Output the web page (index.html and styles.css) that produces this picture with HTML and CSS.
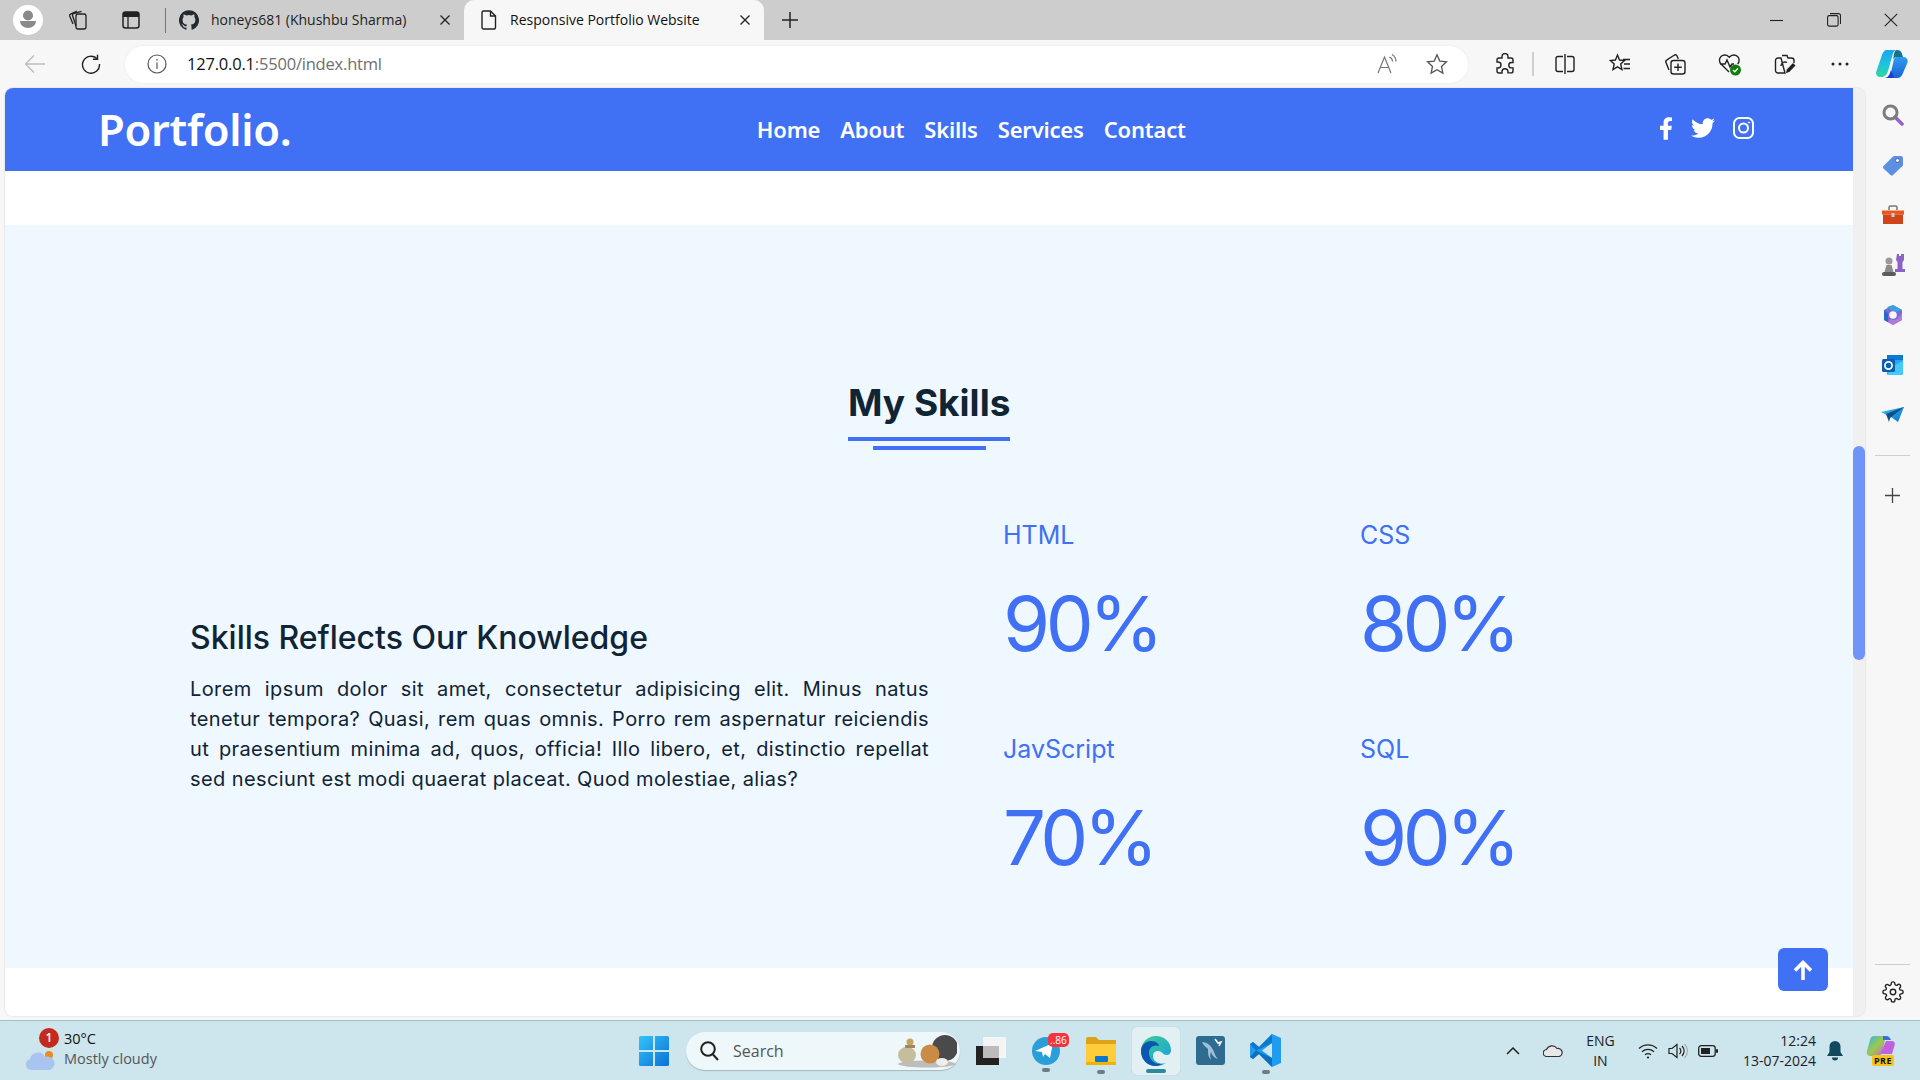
FILE: index.html
```html
<!DOCTYPE html>
<html lang="en">
<head>
<meta charset="utf-8">
<title>Responsive Portfolio Website</title>
<link rel="stylesheet" href="styles.css">
</head>
<body>
<svg class="defs" width="0" height="0" aria-hidden="true">
  <defs>
    <linearGradient id="winG" x1="0" y1="0" x2="1" y2="1"><stop offset="0" stop-color="#35c4f8"/><stop offset="1" stop-color="#0a6fd6"/></linearGradient>
    <linearGradient id="edgeG" x1="0" y1="0" x2="1" y2="1"><stop offset="0" stop-color="#3bd08f"/><stop offset="1" stop-color="#1b9de2"/></linearGradient>
    <linearGradient id="copG" x1="0" y1="0" x2="0" y2="1"><stop offset="0" stop-color="#1aa6f0"/><stop offset=".6" stop-color="#1fc8d8"/><stop offset="1" stop-color="#32d69a"/></linearGradient>
    <linearGradient id="copH" x1="0" y1="0" x2="0" y2="1"><stop offset="0" stop-color="#2f9cf0"/><stop offset="1" stop-color="#1a62d8"/></linearGradient>
    <linearGradient id="sendG" x1="0" y1="0" x2="1" y2="1"><stop offset="0" stop-color="#35c0f5"/><stop offset="1" stop-color="#0b72c9"/></linearGradient>
    <linearGradient id="prism" x1="0" y1="0" x2="1" y2="1"><stop offset="0" stop-color="#2bb4f0"/><stop offset=".5" stop-color="#9ccb4a"/><stop offset="1" stop-color="#c062e0"/></linearGradient>
  </defs>
</svg>

<header class="tabstrip">
  <span class="profile">
    <svg width="30" height="30" viewBox="0 0 30 30"><circle cx="15" cy="15" r="15" fill="#fff"/><circle cx="15" cy="10.5" r="5" fill="#8a8a8a"/><path d="M7 16h16a8 7 0 0 1-16 0z" fill="#8a8a8a"/></svg>
  </span>
  <span class="strip-icon strip-work">
    <svg width="22" height="22" viewBox="0 0 22 22" fill="none" stroke="#222" stroke-width="1.3"><rect x="9" y="5" width="10" height="15" rx="2"/><path d="M9 17 5.500 6.500a1.500 1.500 0 0 1 1-1.900l8-2.200M6 15 2.700 7a1.500 1.500 0 0 1 .8-1.900L10 2"/></svg>
  </span>
  <span class="strip-icon strip-vert">
    <svg width="18" height="18" viewBox="0 0 18 18"><rect x="1" y="1" width="16" height="16" rx="2.500" fill="none" stroke="#222" stroke-width="1.500"/><path d="M1 3.500a2.500 2.500 0 0 1 2.500-2.500h11a2.500 2.500 0 0 1 2.500 2.500V6H1z" fill="#222"/><path d="M6 6v11" stroke="#222" stroke-width="1.300"/></svg>
  </span>
  <span class="strip-sep"></span>
  <div class="tab">
    <svg class="tab-fav" width="20" height="20" viewBox="0 0 24 24"><path fill="#24292f" d="M12 .3a12 12 0 0 0-3.800 23.400c.6.1.8-.3.8-.6v-2c-3.300.7-4-1.600-4-1.600-.6-1.400-1.400-1.800-1.400-1.800-1-.7.1-.7.1-.7 1.200 0 1.900 1.200 1.900 1.200 1 1.800 2.800 1.300 3.500 1 0-.8.4-1.300.7-1.600-2.700-.3-5.500-1.300-5.500-6 0-1.200.5-2.300 1.300-3.100-.2-.4-.6-1.600 0-3.200 0 0 1-.3 3.400 1.200a11.500 11.500 0 0 1 6 0c2.300-1.500 3.300-1.200 3.300-1.200.6 1.600.2 2.800 0 3.200.9.8 1.300 1.900 1.300 3.200 0 4.600-2.800 5.600-5.500 5.900.5.4.9 1 .9 2.200v3.300c0 .3.1.7.8.6A12 12 0 0 0 12 .3"/></svg>
    <span class="tab-title">honeys681 (Khushbu Sharma)</span>
    <svg class="tab-x" width="12" height="12" viewBox="0 0 12 12"><path d="M1.500 1.500l9 9m0-9l-9 9" stroke="#222" stroke-width="1.300"/></svg>
  </div>
  <div class="tab tab-active">
    <svg class="tab-fav" width="16" height="20" viewBox="0 0 16 20" fill="none" stroke="#222" stroke-width="1.400"><path d="M2.500 1h7l5 5v11.500a1.500 1.500 0 0 1-1.500 1.500H2.500A1.500 1.500 0 0 1 1 17.500v-15A1.500 1.500 0 0 1 2.500 1z"/><path d="M9.500 1v5h5"/></svg>
    <span class="tab-title">Responsive Portfolio Website</span>
    <svg class="tab-x" width="12" height="12" viewBox="0 0 12 12"><path d="M1.500 1.500l9 9m0-9l-9 9" stroke="#222" stroke-width="1.300"/></svg>
  </div>
  <svg class="new-tab" width="16" height="16" viewBox="0 0 16 16"><path d="M8 0v16M0 8h16" stroke="#222" stroke-width="1.500"/></svg>
  <div class="win-controls">
    <svg width="14" height="14" viewBox="0 0 14 14"><path d="M0 7.500h13" stroke="#222" stroke-width="1.100"/></svg>
    <svg width="14" height="14" viewBox="0 0 14 14" fill="none" stroke="#222" stroke-width="1.100"><rect x=".6" y="2.600" width="10.500" height="10.500" rx="1.500"/><path d="M3 .6h8.500a2 2 0 0 1 2 2V11"/></svg>
    <svg width="14" height="14" viewBox="0 0 14 14"><path d="M.8.800l12.400 12.400m0-12.400L.8 13.200" stroke="#222" stroke-width="1.100"/></svg>
  </div>
</header>

<div class="toolbar">
  <span class="nav-btn nav-back">
    <svg width="22" height="20" viewBox="0 0 22 20" fill="none" stroke="#bdbdbd" stroke-width="1.400"><path d="M21 10H1.500M10 1.500 1.500 10l8.500 8.500"/></svg>
  </span>
  <span class="nav-btn nav-reload">
    <svg width="20" height="20" viewBox="0 0 20 20" fill="none" stroke="#222" stroke-width="1.400"><path d="M15.800 4.500A8.500 8.500 0 1 0 18.500 10"/><path d="M16.500 .8v4.500H12"/></svg>
  </span>
  <div class="address">
    <svg class="addr-info" width="20" height="20" viewBox="0 0 20 20" fill="none" stroke="#555" stroke-width="1.200"><circle cx="10" cy="10" r="9"/><path d="M10 8.500V15M10 5v1.500"/></svg>
    <span class="url"><span class="url-host">127.0.0.1</span>:5500/index.html</span>
    <svg class="addr-read" width="22" height="22" viewBox="0 0 22 22" fill="none" stroke="#777" stroke-width="1.200"><path d="M1 20 7.500 4 14 20M3.500 14.500h8"/><path d="M12.500 4a5 5 0 0 1 3 4.500M15 1.500a8 8 0 0 1 4 7"/></svg>
    <svg class="addr-star" width="22" height="22" viewBox="0 0 22 22" fill="none" stroke="#555" stroke-width="1.300"><path d="M11 1.800l2.800 6.300 6.700.7-5 4.600 1.400 6.700L11 16.700l-5.900 3.400 1.400-6.700-5-4.600 6.700-.7z"/></svg>
  </div>
  <div class="tools">
    <span class="tool"><svg width="20" height="22" viewBox="0 0 20 22" fill="none" stroke="#222" stroke-width="1.400"><path d="M7 3.500a3 3 0 0 1 6 0V5h3a2 2 0 0 1 2 2v2.500h-1.500a2.700 2.700 0 0 0 0 5.400H18v3a2 2 0 0 1-2 2h-3v-1.200a3 3 0 0 0-6 0V20H4a2 2 0 0 1-2-2v-3h1a3 3 0 0 0 0-6H2V7a2 2 0 0 1 2-2h3z"/></svg></span>
    <span class="tool-sep"></span>
    <span class="tool"><svg width="20" height="22" viewBox="0 0 20 22" fill="none" stroke="#222" stroke-width="1.400"><path d="M8 3.500H3a2 2 0 0 0-2 2v11a2 2 0 0 0 2 2h5M12 3.500h5a2 2 0 0 1 2 2v11a2 2 0 0 1-2 2h-5M10 1v20"/></svg></span>
    <span class="tool"><svg width="22" height="22" viewBox="0 0 22 22" fill="none" stroke="#222" stroke-width="1.400"><path d="M8.500 2l2 5 5 .5-3.800 3.500 1.200 5.500-4.400-2.700L4 16.500 5.200 11 1.400 7.500l5-.5z"/><path d="M14 6.500h7M15 11h6M14.500 15.500H21"/></svg></span>
    <span class="tool"><svg width="22" height="22" viewBox="0 0 22 22" fill="none" stroke="#222" stroke-width="1.400"><rect x="7" y="7.500" width="14" height="13.500" rx="2.500"/><path d="M14 10.500v7.500M10.200 14.200h7.600"/><path d="M5 17 2 9.500a2 2 0 0 1 1-2.600L10.500 2a2 2 0 0 1 2.600 1l1.200 3"/></svg></span>
    <span class="tool"><svg width="24" height="24" viewBox="0 0 24 24"><path d="M11 20 3 12a5.300 5.300 0 0 1 7.500-7.500l.8.8.8-.8a5.300 5.300 0 0 1 7.500 7.500M2 12h5l2-4 3 7 2-3h2" fill="none" stroke="#222" stroke-width="1.400"/><circle cx="17.500" cy="18" r="5.500" fill="#107c10"/><path d="M15 18l1.800 1.800 3.200-3.500" fill="none" stroke="#fff" stroke-width="1.300"/></svg></span>
    <span class="tool"><svg width="22" height="22" viewBox="0 0 22 22"><path d="M8 2.500h5l1 2.500h3.500A2.500 2.500 0 0 1 20 7.500V10M11 20H4a2.500 2.500 0 0 1-2.500-2.500v-10A2.500 2.500 0 0 1 4 5h3zM7 13a4 4 0 0 1 6-3.500" fill="none" stroke="#222" stroke-width="1.400"/><path d="M12 20l.8-3.500L19 10l2.500 2.500-6.200 6.500z" fill="#222"/></svg></span>
    <span class="tool"><svg width="18" height="4" viewBox="0 0 18 4" fill="#222"><circle cx="2" cy="2" r="1.500"/><circle cx="9" cy="2" r="1.500"/><circle cx="16" cy="2" r="1.500"/></svg></span>
    <span class="tool tool-copilot"><svg width="32" height="28" viewBox="0 0 32 28"><path d="M11 0h10c-2 0-3.500 1.500-4.200 4L12 21c-1 3.500-3 6-6.500 6H4c-3 0-4.500-2.500-3.700-5.500L6 5c.8-3 2.500-5 5-5z" fill="url(#copG)"/><path d="M21 0c2.500 0 4.500 1.500 5 4l1 3h-6c-2 0-3.500 1.200-4 3l1-6c.5-2.500 1.500-4 3-4z" fill="#17738f"/><path d="M21 7h6.500c3 0 4.800 2.500 4 5.500L27 23c-1 3-3 5-6 5H9c3 0 5-2 6-5.500l2.500-11.500c.5-2.500 1.500-4 3.500-4z" fill="url(#copH)"/><path d="M8 28c3 0 5-2 6-5l1-3 3 8z" fill="#1c3fc8"/></svg></span>
  </div>
</div>

<div class="win-body">
  <div class="page">
    <main class="doc">
      <nav class="navbar">
        <a class="logo">Portfolio.</a>
        <ul class="nav-links">
          <li>Home</li>
          <li>About</li>
          <li>Skills</li>
          <li>Services</li>
          <li>Contact</li>
        </ul>
        <div class="social">
          <svg width="14" height="23" viewBox="0 0 320 512"><path fill="#fff" d="M279.140 288l14.220-92.660h-88.910v-60.130c0-25.350 12.420-50.060 52.240-50.060h40.420V6.260S260.430 0 225.360 0c-73.220 0-121.080 44.380-121.080 124.720v70.620H22.890V288h81.390v224h100.170V288z"/></svg>
          <svg width="24" height="20" viewBox="0 0 512 416"><path fill="#fff" transform="translate(0 -48)" d="M459.370 151.716c.325 4.548.325 9.097.325 13.645 0 138.720-105.583 298.558-298.558 298.558-59.452 0-114.680-17.219-161.137-47.106 8.447.974 16.568 1.299 25.340 1.299 49.055 0 94.213-16.568 130.274-44.832-46.132-.975-84.792-31.188-98.112-72.772 6.498.974 12.995 1.624 19.818 1.624 9.421 0 18.843-1.300 27.614-3.573-48.081-9.747-84.143-51.980-84.143-102.985v-1.299c13.969 7.797 30.214 12.670 47.431 13.319-28.264-18.843-46.781-51.005-46.781-87.391 0-19.492 5.197-37.360 14.294-52.954 51.655 63.675 129.300 105.258 216.365 109.807-1.624-7.797-2.599-15.918-2.599-24.040 0-57.828 46.782-104.934 104.934-104.934 30.213 0 57.502 12.670 76.670 33.137 23.715-4.548 46.456-13.320 66.599-25.340-7.798 24.366-24.366 44.833-46.132 57.827 21.117-2.273 41.584-8.122 60.426-16.243-14.292 20.791-32.161 39.308-52.628 54.253z"/></svg>
          <svg width="21" height="22" viewBox="0 0 21 22" fill="none" stroke="#fff" stroke-width="2"><rect x="1" y="1" width="19" height="20" rx="5.500"/><circle cx="10.500" cy="11" r="4.500"/><circle cx="16" cy="5.500" r=".6" fill="#fff" stroke-width="1"/></svg>
        </div>
      </nav>
      <section class="skills">
        <div class="section-title">
          <h2>My Skills</h2>
          <span class="title-bar"></span>
        </div>
        <div class="skills-row">
          <div class="skills-text">
            <h3>Skills Reflects Our Knowledge</h3>
            <p>Lorem ipsum dolor sit amet, consectetur adipisicing elit. Minus natus tenetur tempora? Quasi, rem quas omnis. Porro rem aspernatur reiciendis ut praesentium minima ad, quos, officia! Illo libero, et, distinctio repellat sed nesciunt est modi quaerat placeat. Quod molestiae, alias?</p>
          </div>
          <div class="skills-grid">
            <div class="skill"><h4>HTML</h4><span class="pct">90%</span></div>
            <div class="skill"><h4>CSS</h4><span class="pct">80%</span></div>
            <div class="skill"><h4>JavScript</h4><span class="pct">70%</span></div>
            <div class="skill"><h4>SQL</h4><span class="pct">90%</span></div>
          </div>
        </div>
      </section>
      <button class="to-top" aria-label="Back to top">
        <svg width="20" height="20" viewBox="0 0 20 20" fill="none" stroke="#fff" stroke-width="3.600"><path d="M10 20V3M2 10.500 10 2.500l8 8"/></svg>
      </button>
    </main>
    <div class="scrollbar"><span class="thumb"></span></div>
  </div>
  <aside class="sidebar">
    <span class="side-icon"><svg width="22" height="22" viewBox="0 0 22 22"><path d="M13 13l7 7" stroke="#9a62c9" stroke-width="3.600" stroke-linecap="round"/><circle cx="8.500" cy="8.500" r="6.500" fill="none" stroke="#7c7c7c" stroke-width="3"/></svg></span>
    <span class="side-icon"><svg width="22" height="22" viewBox="0 0 22 22"><path d="M1.500 12 11 2.500a2 2 0 0 1 1.500-.5H19a2 2 0 0 1 2 2v6.500a2 2 0 0 1-.5 1.500L11 21a2 2 0 0 1-2.500 0l-7-6.500a2 2 0 0 1 0-2.500z" fill="#5b8fe0"/><circle cx="15.500" cy="6.500" r="2" fill="#fff" stroke="#4a5fb0"/></svg></span>
    <span class="side-icon"><svg width="22" height="20" viewBox="0 0 22 20"><path d="M7 5V2.500A1.500 1.500 0 0 1 8.500 1h5A1.500 1.500 0 0 1 15 2.500V5" fill="none" stroke="#777" stroke-width="1.500"/><path d="M0 5.500h22v4H0z" fill="#e8591f"/><path d="M1 9.500h20V19H1z" fill="#d0441a"/><rect x="9.500" y="8" width="3" height="4" fill="#ccc"/></svg></span>
    <span class="side-icon"><svg width="24" height="24" viewBox="0 0 24 24"><path d="M16 1h2v2h2V1h3v6l-1.500 2v7H24v3H14v-3h2.500V9L15 7z" fill="#8c62c6"/><circle cx="8" cy="8" r="3.500" fill="#9a9a9a"/><path d="M5.500 12h5l2 7h-9z" fill="#8c8c8c"/><rect x="1" y="19" width="14" height="4" rx="2" fill="#5c5c5c"/></svg></span>
    <span class="side-icon"><svg width="22" height="22" viewBox="0 0 22 22"><path d="M11 1l9 5v10l-9 5-9-5V6z" fill="#7b6bd8"/><path d="M11 1l9 5-6 2a4 4 0 0 0-4-1L5 3z" fill="#3aa0e0"/><path d="M2 6v10l4 2V9z" fill="#2a68c8"/><path d="M11 21l9-5v-7l-4 5a5 5 0 0 1-7 1L6 18z" fill="#b07adc"/><circle cx="11" cy="11" r="3.800" fill="#f7f7f7"/></svg></span>
    <span class="side-icon"><svg width="22" height="22" viewBox="0 0 22 22"><rect x="5" y="1" width="16" height="20" rx="1.500" fill="#28a8ea"/><path d="M5 1h16v5H5z" fill="#0f78d4"/><path d="M11 12l10-5v14H5z" fill="#50d9ff" opacity=".7"/><rect x="0" y="5" width="13" height="13" rx="1.500" fill="#0a5fb4"/><circle cx="6.500" cy="11.500" r="3.600" fill="none" stroke="#fff" stroke-width="1.700"/></svg></span>
    <span class="side-icon"><svg width="24" height="16" viewBox="0 0 24 16"><path d="M0 5 23 0 17 15 10 10z" fill="url(#sendG)"/><path d="M5 7 23 0 9 11l-1 4z" fill="#0f4d8c"/></svg></span>
    <span class="side-rule"></span>
    <span class="side-icon side-plus"><svg width="15" height="15" viewBox="0 0 15 15"><path d="M7.500 0v15M0 7.500h15" stroke="#444" stroke-width="1.300"/></svg></span>
    <span class="side-rule side-rule-low"></span>
    <span class="side-icon side-gear"><svg width="22" height="22" viewBox="0 0 24 24" fill="none" stroke="#222" stroke-width="1.500"><circle cx="12" cy="12" r="3"/><path d="M19.400 15a1.650 1.650 0 0 0 .33 1.820l.06.06a2 2 0 1 1-2.830 2.830l-.06-.06a1.650 1.650 0 0 0-2.820 1.170V21a2 2 0 0 1-4 0v-.09a1.650 1.650 0 0 0-2.820-1.170l-.06.06a2 2 0 1 1-2.830-2.830l.06-.06A1.650 1.650 0 0 0 3.260 14H3a2 2 0 0 1 0-4h.09a1.650 1.650 0 0 0 1.170-2.820l-.06-.06a2 2 0 1 1 2.830-2.830l.06.06A1.650 1.650 0 0 0 10 3.260V3a2 2 0 0 1 4 0v.09a1.650 1.650 0 0 0 2.820 1.170l.06-.06a2 2 0 1 1 2.830 2.830l-.06.06A1.650 1.650 0 0 0 20.740 10H21a2 2 0 0 1 0 4h-.09a1.650 1.650 0 0 0-1.510 1z"/></svg></span>
  </aside>
</div>

<footer class="taskbar">
  <div class="weather">
    <span class="weather-icon">
      <svg width="31" height="22" viewBox="0 0 31 22"><circle cx="24" cy="6" r="4" fill="#f08a24"/><path d="M6 21a5.500 5.500 0 0 1-1-10.800A8 8 0 0 1 20 8a6.500 6.500 0 0 1 5 13z" fill="#a9c4ee"/></svg>
      <span class="weather-badge">1</span>
    </span>
    <div class="weather-text"><span class="temp">30°C</span><span class="cond">Mostly cloudy</span></div>
  </div>
  <div class="task-center">
    <svg class="task-win" width="30" height="30" viewBox="0 0 30 30"><path fill="url(#winG)" d="M0 1.500A1.500 1.500 0 0 1 1.500 0H14v14H0zM16 0h12.500A1.500 1.500 0 0 1 30 1.500V14H16zM0 16h14v14H1.500A1.500 1.500 0 0 1 0 28.500zM16 16h14v12.500a1.500 1.500 0 0 1-1.500 1.500H16z"/></svg>
    <div class="task-search">
      <svg width="19" height="20" viewBox="0 0 19 20" fill="none" stroke="#222" stroke-width="2"><circle cx="8" cy="8" r="6.800"/><path d="M13 13.500 18 19"/></svg>
      <span class="search-label">Search</span>
      <svg class="search-art" width="60" height="34" viewBox="0 0 60 34"><ellipse cx="30" cy="30" rx="29" ry="3.500" fill="#bdbdbd"/><circle cx="48" cy="14" r="13" fill="#4a4a4a"/><circle cx="33" cy="20" r="9.500" fill="#c98b45"/><ellipse cx="10" cy="21" rx="9" ry="8" fill="#c6bd9c"/><circle cx="13" cy="8" r="3.500" fill="#c9a25f"/><rect x="8" y="11" width="10" height="3" fill="#9b8a5e"/><ellipse cx="45" cy="28" rx="6" ry="4" fill="#eee"/></svg>
    </div>
    <span class="app app-view">
      <svg width="30" height="28" viewBox="0 0 30 28"><rect x="0" y="9" width="23" height="19" fill="#222"/><rect x="7" y="0" width="23" height="21" fill="#f5f5f5"/><rect x="7" y="9" width="16" height="12" fill="#bcbcbc"/></svg>
    </span>
    <span class="app app-tg">
      <svg width="28" height="34" viewBox="0 0 28 34"><circle cx="14" cy="17" r="14" fill="#2a9ed8"/><path d="M3 17 21 9l-3 15-5-4-2 3-1-5z" fill="#fff"/></svg>
      <span class="tg-badge">..86</span>
      <i class="run-dot"></i>
    </span>
    <span class="app app-folder">
      <svg width="30" height="28" viewBox="0 0 30 28"><path d="M0 2a2 2 0 0 1 2-2h8l3 3h17v5H0z" fill="#e0a21a"/><path d="M0 7h30v21H0z" fill="#ffcc3a"/><rect x="9" y="19" width="13" height="6" rx="1" fill="#0a78d0"/><rect x="0" y="25" width="30" height="3" fill="#f0b400"/></svg>
      <i class="run-dot"></i>
    </span>
    <span class="app app-edge">
      <svg width="30" height="30" viewBox="0 0 30 30"><path d="M15 0C6 0 0 7 0 15c0 9 7 15 15 15 4 0 7-1 10-3-6 2-13-1-13-7 0-3 2-5 5-5 5 0 4 4 9 4 3 0 4-3 4-5C30 6 23 0 15 0z" fill="url(#edgeG)"/><path d="M0 15c0-6 5-10 10-10s8 3 8 5c-5-2-10 1-10 7 0 6 5 12 13 11-2 1-4 2-6 2C7 30 0 24 0 15z" fill="#0b57b0"/></svg>
      <i class="run-bar"></i>
    </span>
    <span class="app app-sql">
      <svg width="29" height="29" viewBox="0 0 29 29"><rect width="29" height="29" rx="3" fill="#2f6a90"/><path d="M6 6c5 0 10 4 12 10 1 3 2 5 4 7-4-1-6-4-7-7-1 3-1 5 0 8-3-3-3-7-3-11-2-2-5-4-6-7z" fill="#9fc0d4"/><path d="M19 3l3 4 3-1-2 4" fill="none" stroke="#fff" stroke-width="1.500"/></svg>
    </span>
    <span class="app app-code">
      <svg width="31" height="33" viewBox="0 0 31 33"><path d="M22 0 9 13 3 8 0 10v13l3 2 6-5 13 13 9-4V4z" fill="#1f9cf0"/><path d="M22 9 12 16.500 22 24z" fill="#cde5ec"/><path d="M22 0 9 13 3 8 0 10l6 6.500L22 9z" fill="#0f78c8"/><path d="M6 16.500 0 23l3 2 6-5 13 13V24z" fill="#0e6fbc"/></svg>
      <i class="run-dot"></i>
    </span>
  </div>
  <div class="tray">
    <svg class="tray-chev" width="14" height="8" viewBox="0 0 14 8" fill="none" stroke="#222" stroke-width="1.500"><path d="M1 7l6-6 6 6"/></svg>
    <svg class="tray-cloud" width="20" height="13" viewBox="0 0 20 13"><path d="M4 12.500a3.500 3.500 0 0 1-.5-7A6 6 0 0 1 14 4.500a4 4 0 0 1 2 8z" fill="#e8e8e8" stroke="#333" stroke-width="1.200"/></svg>
    <div class="tray-lang"><span>ENG</span><span>IN</span></div>
    <svg class="tray-wifi" width="20" height="16" viewBox="0 0 20 16" fill="none" stroke="#222" stroke-width="1.300"><path d="M1 5.500a13 13 0 0 1 18 0M4 8.700a9 9 0 0 1 12 0M7 11.700a5 5 0 0 1 6 0"/><circle cx="10" cy="14.500" r="1.100" fill="#222" stroke="none"/></svg>
    <svg class="tray-vol" width="20" height="16" viewBox="0 0 20 16" fill="none" stroke="#222" stroke-width="1.200"><path d="M1 5.500h3L9 1.500v13L4 10.500H1z"/><path d="M11.500 5a4 4 0 0 1 0 6M14 3a7 7 0 0 1 0 10"/><path d="M16.500 1a10 10 0 0 1 0 14" stroke="#aaa"/></svg>
    <svg class="tray-batt" width="20" height="12" viewBox="0 0 20 12"><rect x=".7" y=".7" width="16.500" height="10.600" rx="2.500" fill="none" stroke="#222" stroke-width="1.300"/><rect x="3" y="3" width="9" height="6" fill="#222"/><rect x="18" y="4" width="2" height="4" rx="1" fill="#222"/></svg>
    <div class="tray-clock"><span>12:24</span><span>13-07-2024</span></div>
    <svg class="tray-bell" width="16" height="20" viewBox="0 0 16 20"><path d="M8 0a5.500 5.500 0 0 1 5.500 5.500V11l2.500 4H0l2.500-4V5.500A5.500 5.500 0 0 1 8 0z" fill="#13495c"/><path d="M5 16.500h6a3 3 0 0 1-6 0z" fill="#13495c"/></svg>
    <span class="tray-pre">
      <svg width="29" height="24" viewBox="0 0 29 24"><path d="M8 0h12l-4 16c-.6 2.500-2 4-4.500 4H5c-3 0-5-2-4-5L4 4c.7-2.500 2-4 4-4z" fill="url(#prism)"/><path d="M17 0h3c3 0 4 2 5 4h-8z" fill="#3b6fd8"/><path d="M20 5h6c2 0 3.300 2 2.700 4L26 18H14z" fill="#c062e0"/></svg>
      <span class="pre-label">PRE</span>
    </span>
  </div>
</footer>
</body>
</html>
```

FILE: styles.css
```css
* { box-sizing: border-box; margin: 0; padding: 0; }

html, body { width: 1920px; height: 1080px; overflow: hidden; }

body {
  display: flex;
  flex-direction: column;
  font-family: "Open Sans", "Noto Sans", sans-serif;
  background: #f7f7f7;
  color: #222;
}

.defs { position: absolute; }

svg { display: block; flex: none; }

/* ---------- tab strip ---------- */
.tabstrip {
  display: flex;
  align-items: center;
  height: 40px;
  flex: none;
  padding-left: 13px;
  background: #cdcdcd;
}

.profile { width: 30px; height: 30px; }
.strip-work { margin-left: 24px; }
.strip-vert { margin-left: 33px; }
.strip-sep { width: 1px; height: 25px; margin-left: 25px; background: #777; }

.tab {
  display: flex;
  align-items: center;
  height: 40px;
  width: 298px;
  padding-left: 13px;
  font-size: 14px;
  color: #222;
}

.tab-fav { margin-right: 12px; }
.tab-title { white-space: nowrap; flex: 1; margin-top: -2px; }
.tab-x { margin-right: 13px; }

.tab-active {
  width: 300px;
  padding-left: 17px;
  background: #f7f7f7;
  border-radius: 10px 10px 0 0;
  color: #111;
}

.tab-active .tab-fav { margin-right: 13px; }

.new-tab { margin-left: 18px; }

.win-controls {
  display: flex;
  gap: 43px;
  margin-left: auto;
  margin-right: 22px;
}

/* ---------- toolbar ---------- */
.toolbar {
  display: flex;
  align-items: center;
  height: 48px;
  flex: none;
  background: #f7f7f7;
}

.nav-btn { display: flex; justify-content: center; }
.nav-back { width: 22px; margin-left: 24px; }
.nav-reload { width: 20px; margin-left: 35px; }

.address {
  display: flex;
  align-items: center;
  width: 1343px;
  height: 37px;
  margin-left: 24px;
  padding-left: 22px;
  background: #fff;
  border-radius: 19px;
  box-shadow: 0 0 3px rgba(0, 0, 0, .06);
}

.url {
  margin-left: 20px;
  margin-top: -2px;
  font-size: 16.5px;
  letter-spacing: -.2px;
  color: #6f6f6f;
  white-space: nowrap;
}

.url-host { color: #111; }
.addr-read { margin-left: auto; }
.addr-star { margin-left: 27px; margin-right: 20px; }

.tools { display: flex; align-items: center; margin-left: 9px; }
.tool { display: flex; justify-content: center; width: 55px; }
.tool-copilot { width: 50px; }
.tool-sep { width: 2px; height: 24px; margin-right: 3px; background: #cfcfcf; }

/* ---------- browser body ---------- */
.win-body {
  display: flex;
  height: 932px;
  flex: none;
  padding-left: 5px;
}

.page {
  display: flex;
  width: 1860px;
  height: 928px;
  border-radius: 8px;
  overflow: hidden;
  box-shadow: 0 0 2px rgba(0, 0, 0, .18);
}

.doc {
  position: relative;
  width: 1848px;
  background: #fff;
}

.scrollbar { width: 12px; background: #f0f0f0; }

.thumb {
  display: block;
  height: 214px;
  margin-top: 358px;
  background: #7094f7;
  border-radius: 6px;
}

/* ---------- sidebar ---------- */
.sidebar {
  display: flex;
  flex-direction: column;
  align-items: center;
  width: 55px;
}

.side-icon {
  display: flex;
  align-items: center;
  justify-content: center;
  height: 50px;
  flex: none;
}

.sidebar .side-icon:first-child { margin-top: 2px; }

.side-rule { width: 35px; height: 1px; margin-top: 15px; background: #cfcfcf; flex: none; }
.side-plus { height: 30px; margin-top: 24px; }
.side-rule-low { margin-top: auto; }
.side-gear { height: 28px; margin-top: 13px; margin-bottom: 14px; }

/* ---------- portfolio nav ---------- */
.navbar {
  display: flex;
  align-items: center;
  justify-content: space-between;
  height: 83px;
  padding: 0 99px 0 93px;
  background: #4070f4;
  color: #fff;
}

.logo {
  font-family: "Noto Sans", "Open Sans", sans-serif;
  font-size: 43.5px;
  font-weight: 600;
  letter-spacing: -.3px;
  line-height: 1;
}

.nav-links {
  display: flex;
  gap: 20px;
  margin-top: -2px;
  margin-right: 8px;
  list-style: none;
  font-family: "Noto Sans", "Open Sans", sans-serif;
  font-size: 22px;
  font-weight: 600;
  letter-spacing: -.2px;
}

.social { display: flex; align-items: center; gap: 18px; margin-top: -3px; }

/* ---------- skills section ---------- */
.skills {
  height: 743px;
  margin-top: 54px;
  padding-top: 156px;
  background: #eff7ff;
  color: #0f2435;
  font-family: Inter, "Open Sans", sans-serif;
}

.section-title {
  display: flex;
  flex-direction: column;
  align-items: center;
}

.section-title h2 {
  padding-bottom: 12px;
  border-bottom: 4px solid #4070f4;
  font-size: 37px;
  font-weight: 700;
  line-height: 44px;
  width: 162px;
  white-space: nowrap;
  text-align: center;
}

.title-bar {
  width: 113px;
  height: 4px;
  margin-top: 5px;
  background: #4070f4;
}

.skills-row {
  display: flex;
  align-items: center;
  margin-top: 69px;
  padding-left: 185px;
}

.skills-text { width: 739px; margin-top: 6px; }

.skills-text h3 {
  font-size: 32px;
  font-weight: 500;
  line-height: 44px;
  white-space: nowrap;
}

.skills-text p {
  margin-top: 14px;
  font-size: 20px;
  letter-spacing: .4px;
  line-height: 30px;
  text-align: justify;
}

.skills-grid {
  display: grid;
  grid-template-columns: 357px 357px;
  row-gap: 62px;
  margin-left: 74px;
  color: #4070f4;
}

.skill h4 {
  font-size: 25px;
  font-weight: 400;
  line-height: 32px;
}

.pct {
  display: block;
  margin-top: 24px;
  font-size: 76px;
  font-weight: 400;
  letter-spacing: -4.5px;
  line-height: 96px;
}

.to-top {
  position: absolute;
  left: 1773px;
  top: 860px;
  display: flex;
  align-items: center;
  justify-content: center;
  width: 50px;
  height: 43px;
  border: 0;
  border-radius: 6px;
  background: #4070f4;
}

/* ---------- taskbar ---------- */
.taskbar {
  position: relative;
  display: flex;
  align-items: center;
  height: 60px;
  flex: none;
  background: #cde5ec;
  border-top: 1px solid #a9bcc4;
}

.weather { display: flex; align-items: center; width: 639px; padding-left: 25px; }

.weather-icon { position: relative; width: 39px; height: 40px; }
.weather-icon svg { margin-top: 18px; }

.weather-badge {
  position: absolute;
  left: 14px;
  top: -3px;
  width: 20px;
  height: 20px;
  border-radius: 50%;
  background: #c42b1c;
  color: #fff;
  font-size: 12px;
  font-weight: 600;
  line-height: 20px;
  text-align: center;
}

.weather-text {
  display: flex;
  flex-direction: column;
  margin-top: -3px;
  font-size: 14.5px;
  line-height: 20px;
}
.temp { color: #111; }
.cond { color: #555; }

.task-center { display: flex; align-items: center; }

.task-search {
  display: flex;
  align-items: center;
  width: 274px;
  height: 38px;
  margin-left: 17px;
  padding-left: 14px;
  border-radius: 19px;
  background: #eef7fa;
  box-shadow: 0 1px 1px rgba(0, 0, 0, .2);
}

.search-label { margin-left: 14px; font-size: 16px; color: #555; }
.search-art { margin-left: auto; margin-right: 3px; }

.app {
  position: relative;
  display: flex;
  align-items: center;
  justify-content: center;
}

.app-view { margin-left: 16px; }
.app-tg { margin-left: 26px; }
.app-folder { margin-left: 26px; }
.app-edge {
  width: 48px;
  height: 48px;
  margin-left: 16px;
  border-radius: 5px;
  background: #e2eff3;
  box-shadow: 0 0 1px rgba(0, 0, 0, .2);
}
.app-sql { margin-left: 16px; }
.app-code { margin-left: 25px; }

.tg-badge {
  position: absolute;
  left: 16px;
  top: -1px;
  padding: 0 2px;
  border-radius: 5px;
  background: #f2353c;
  color: #fff;
  font-size: 10px;
  line-height: 14px;
  white-space: nowrap;
}

.run-dot,
.run-bar {
  position: absolute;
  left: 50%;
  bottom: -6px;
  width: 8px;
  height: 4px;
  margin-left: -4px;
  border-radius: 2px;
  background: #6c7d85;
}

.app-tg .run-dot { bottom: -4px; }
.app-folder .run-dot { bottom: -9px; }
.app-code .run-dot { bottom: -7px; }

.run-bar { bottom: 2px; width: 20px; margin-left: -10px; background: #2a8a9c; }

.tray { display: flex; align-items: center; margin-left: auto; }
.tray-chev { margin-right: 23px; }
.tray-cloud { margin-right: 23px; }

.tray-lang {
  display: flex;
  flex-direction: column;
  align-items: center;
  width: 29px;
  margin-right: 23px;
  font-size: 14px;
  line-height: 20px;
}

.tray-wifi { margin-right: 10px; }
.tray-vol { margin-right: 10px; }

.tray-clock {
  display: flex;
  flex-direction: column;
  align-items: flex-end;
  margin-left: 25px;
  font-size: 14px;
  line-height: 20px;
  color: #222;
}

.tray-bell { margin-left: 11px; }

.tray-pre { position: relative; width: 29px; height: 30px; margin-left: 23px; margin-right: 25px; }

.pre-label {
  position: absolute;
  left: 6px;
  bottom: 0;
  padding: 0 2px;
  border-radius: 2px;
  background: #f6c21c;
  color: #111;
  font-size: 9px;
  font-weight: 700;
  line-height: 11px;
  letter-spacing: .4px;
}
```
